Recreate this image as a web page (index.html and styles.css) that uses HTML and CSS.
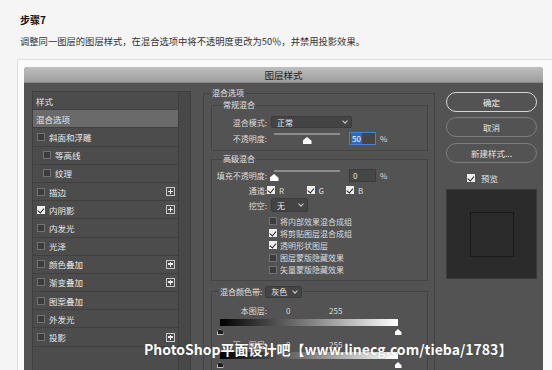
FILE: index.html
```html
<!DOCTYPE html>
<html lang="zh">
<head>
  <meta charset="UTF-8">
  <meta name="viewport" content="width=device-width, initial-scale=1.0">
  <title>步骤7</title>
  <link rel="stylesheet" href="styles.css">
</head>
<body>
  <div class="step">
    <h3 class="step-title">步骤7</h3>
    <p class="step-desc">调整同一图层的图层样式，在混合选项中将不透明度更改为50％，并禁用投影效果。</p>
  </div>

  <div class="frame">
    <div class="dialog">
      <div class="titlebar">图层样式</div>
      <div class="dialog-body">
        <!-- effects list -->
        <div class="side">
          <ul class="style-list">
            <li class="head">样式</li>
            <li class="active">混合选项</li>
            <li><span class="cb"></span>斜面和浮雕</li>
            <li class="sub"><span class="cb"></span>等高线</li>
            <li class="sub"><span class="cb"></span>纹理</li>
            <li><span class="cb"></span>描边<span class="plus"></span></li>
            <li><span class="cb on"></span>内阴影<span class="plus"></span></li>
            <li><span class="cb"></span>内发光</li>
            <li><span class="cb"></span>光泽</li>
            <li><span class="cb"></span>颜色叠加<span class="plus"></span></li>
            <li><span class="cb"></span>渐变叠加<span class="plus"></span></li>
            <li><span class="cb"></span>图案叠加</li>
            <li><span class="cb"></span>外发光</li>
            <li><span class="cb"></span>投影<span class="plus"></span></li>
          </ul>
          <div class="gutter"></div>
        </div>

        <!-- blending options -->
        <div class="main">
          <fieldset class="group outer">
            <legend>混合选项</legend>

            <fieldset class="group normal">
              <legend class="sub-legend">常规混合</legend>
              <div class="row first">
                <span class="label">混合模式:</span>
                <div class="select wide">正常<span class="chev"></span></div>
              </div>
              <div class="row num">
                <span class="label">不透明度:</span>
                <div class="slider"><span class="thumb" style="left: 50%"></span></div>
                <div class="field focus"><span class="sel">50</span></div>
                <span class="unit">%</span>
              </div>
            </fieldset>

            <fieldset class="group advanced">
              <legend class="sub-legend">高级混合</legend>
              <div class="row num fill">
                <span class="label">填充不透明度:</span>
                <div class="slider"><span class="thumb" style="left: 0%"></span></div>
                <div class="field">0</div>
                <span class="unit">%</span>
              </div>
              <div class="row channels">
                <span class="label">通道:</span>
                <span class="chan"><span class="cb on"></span>R</span>
                <span class="chan"><span class="cb on"></span>G</span>
                <span class="chan"><span class="cb on"></span>B</span>
              </div>
              <div class="row knock">
                <span class="label">挖空:</span>
                <div class="select short">无<span class="chev"></span></div>
              </div>
              <ul class="options">
                <li><span class="cb"></span>将内部效果混合成组</li>
                <li><span class="cb on"></span>将剪贴图层混合成组</li>
                <li><span class="cb on"></span>透明形状图层</li>
                <li><span class="cb"></span>图层蒙版隐藏效果</li>
                <li><span class="cb"></span>矢量蒙版隐藏效果</li>
              </ul>
            </fieldset>

            <fieldset class="group blendif">
              <legend class="band-legend">混合颜色带:<span class="select short">灰色<span class="chev"></span></span></legend>
              <div class="row levels">
                <span class="label">本图层:</span>
                <span class="lvl-lo">0</span>
                <span class="lvl-hi">255</span>
              </div>
              <div class="ramp"></div>
              <div class="stops"><span class="stop dark"></span><span class="stop light"></span></div>
              <div class="row levels next">
                <span class="label">下一图层:</span>
                <span class="lvl-lo">0</span>
                <span class="lvl-hi">255</span>
              </div>
              <div class="ramp"></div>
              <div class="stops"><span class="stop dark"></span><span class="stop light"></span></div>
            </fieldset>
          </fieldset>
        </div>

        <!-- buttons and preview -->
        <div class="actions">
          <button class="btn default">确定</button>
          <button class="btn">取消</button>
          <button class="btn">新建样式...</button>
          <label class="preview-check"><span class="cb on"></span>预览</label>
          <div class="preview"><div class="swatch"></div></div>
        </div>
      </div>
    </div>
  </div>

  <div class="watermark">PhotoShop平面设计吧【www.linecg.com/tieba/1783】</div>
</body>
</html>
```

FILE: styles.css
```css
body {
  margin: 0;
  height: 370px;
  overflow: hidden;
  background-color: #f5f5f5;
  font-family: "Noto Sans CJK SC", "Liberation Sans", sans-serif;
  position: relative;
}

ul {
  list-style: none;
  margin: 0;
  padding: 0;
}

/* article text */
.step {
  padding: 14px 0 0 20px;
}

.step-title {
  margin: 0;
  font-size: 10px;
  line-height: 12px;
  font-weight: bold;
  color: #111;
}

.step-desc {
  margin: 9px 0 0;
  font-size: 9.3px;
  line-height: 12px;
  color: #333;
}

.frame {
  margin: 12px 0 0 17px;
  width: 560px;
  padding: 7px 0 0 6px;
  border: 1px solid #e0e0e0;
  background-color: #fafafa;
}

/* dialog */
.dialog {
  width: 519px;
  border-radius: 4px 4px 0 0;
  overflow: hidden;
  background-color: #535353;
}

.titlebar {
  height: 16px;
  line-height: 16px;
  text-align: center;
  font-size: 9.5px;
  color: #1c1c1c;
  background: linear-gradient(#bfbfbf, #9d9d9d);
  border-bottom: 1px solid #888;
  box-sizing: border-box;
}

.dialog-body {
  display: flex;
  height: 300px;
  padding: 8px 0 0 8px;
}

.side {
  display: flex;
  width: 159px;
  height: 292px;
  border: 1px solid #3f3f3f;
  box-sizing: border-box;
}

.style-list {
  flex: 1;
  background-color: #4c4c4c;
}

.style-list li {
  display: flex;
  align-items: center;
  gap: 4px;
  height: 18.2px;
  padding-left: 4px;
  border-bottom: 1px solid #404040;
  box-sizing: border-box;
  font-size: 8.5px;
  color: #e8e8e8;
}

.style-list .head,
.style-list .active {
  padding-left: 3px;
}

.style-list .active {
  background-color: #6a6a6a;
}

.style-list .sub {
  padding-left: 10px;
}

.gutter {
  width: 11px;
  background-color: #484848;
  border-left: 1px solid #3f3f3f;
}

.cb {
  position: relative;
  flex: none;
  width: 8px;
  height: 8px;
  border: 1px solid #727272;
  background-color: #3c3c3c;
  box-sizing: border-box;
}

.cb.on {
  border-color: #eee;
  background-color: #eee;
}

.cb.on::after {
  content: "";
  position: absolute;
  left: 1px;
  top: 0;
  width: 3px;
  height: 4.5px;
  border: solid #222;
  border-width: 0 1.5px 1.5px 0;
  transform: rotate(40deg);
}

.plus {
  position: relative;
  width: 9px;
  height: 9px;
  margin-left: auto;
  margin-right: 3px;
  border: 1px solid #c8c8c8;
  box-sizing: border-box;
}

.plus::before,
.plus::after {
  content: "";
  position: absolute;
  background-color: #eee;
}

.plus::before {
  left: 1px;
  right: 1px;
  top: 2.5px;
  height: 1.5px;
}

.plus::after {
  top: 1px;
  bottom: 1px;
  left: 2.5px;
  width: 1.5px;
}

/* blending options */
.main {
  width: 245px;
  padding-left: 12px;
  box-sizing: border-box;
  font-size: 8px;
  color: #dcdcdc;
}

.group {
  margin: 0;
  padding: 0;
  min-width: 0;
  border: 1px solid #444;
}

.group legend {
  padding: 0 1px;
  font-size: 8px;
  line-height: 10px;
  color: #e2e2e2;
}

.outer {
  width: 232px;
  height: 300px;
  margin-top: -3px;
  padding: 0 6px 0 7px;
  box-sizing: border-box;
}

.sub-legend {
  margin-left: 10px;
}

.normal {
  margin-top: 2px;
  padding-bottom: 5px;
}

.advanced {
  margin-top: 3px;
  padding-bottom: 4px;
}

.blendif {
  margin-top: 5px;
  height: 100px;
}

.row {
  display: flex;
  align-items: center;
}

.label {
  width: 55px;
  flex: none;
  text-align: right;
}

.row.first {
  margin-top: 6px;
  height: 12px;
}

.row.num {
  margin-top: 4px;
  height: 13px;
}

.row.fill {
  margin-top: 5px;
}

.select {
  display: flex;
  align-items: center;
  justify-content: space-between;
  height: 12px;
  margin-left: 4px;
  padding: 0 4px 0 5px;
  background-color: #444;
  border: 1px solid #3b3b3b;
  border-radius: 2px;
  box-sizing: border-box;
  font-size: 8px;
  color: #eaeaea;
}

.select.wide {
  width: 81px;
}

.select.short {
  width: 37px;
}

.chev {
  width: 3px;
  height: 3px;
  margin-top: -2px;
  border: solid #cfcfcf;
  border-width: 0 1px 1px 0;
  transform: rotate(45deg);
}

.slider {
  position: relative;
  width: 66px;
  height: 13px;
  margin-left: 7px;
  background: linear-gradient(#8c8c8c, #8c8c8c) 0 1px / 100% 2px no-repeat;
}

.thumb {
  position: absolute;
  top: 5px;
  width: 9px;
  height: 7px;
  margin-left: -4.5px;
  background-color: #fff;
  clip-path: polygon(50% 0, 100% 55%, 100% 100%, 0 100%, 0 55%);
}

.field {
  width: 27px;
  height: 13px;
  margin-left: 9px;
  padding-left: 3px;
  line-height: 11px;
  background-color: #464646;
  border: 1px solid #3b3b3b;
  box-sizing: border-box;
  color: #e6e6e6;
}

.field.focus {
  border-color: #3f83db;
  padding-left: 1px;
}

.sel {
  display: inline-block;
  padding: 0 1px;
  background-color: #2f69bf;
  color: #fff;
}

.unit {
  margin-left: 4px;
}

.channels {
  margin-top: 3px;
  height: 10px;
}

.chan {
  display: flex;
  align-items: center;
  gap: 4px;
  width: 39.5px;
}

.channels .chan:first-of-type {
  margin-left: 3px;
}

.knock {
  margin-top: 3px;
  height: 14px;
}

.knock .select {
  height: 14px;
}

.options {
  margin: 3px 0 0 57px;
}

.options li {
  display: flex;
  align-items: center;
  gap: 3px;
  height: 12.2px;
}

.band-legend {
  display: flex;
  align-items: center;
  margin-left: 7px;
}

.band-legend .select {
  margin-left: 3px;
}

.levels {
  margin-top: 8px;
  height: 10px;
}

.levels.next {
  margin-top: 5px;
}

.lvl-lo {
  margin-left: 19px;
  width: 43px;
}

.ramp {
  width: 178px;
  height: 7px;
  margin: 3px 0 0 8px;
  background: linear-gradient(to right, #000, #fff);
}

.levels.next + .ramp {
  margin-top: 2px;
}

.stops {
  display: flex;
  justify-content: space-between;
  width: 185px;
  height: 6px;
  margin: 3px 0 0 4.5px;
}

.stop {
  width: 7px;
  height: 6px;
  clip-path: polygon(50% 0, 100% 55%, 100% 100%, 0 100%, 0 55%);
}

.stop.dark {
  background-color: #1a1a1a;
  box-shadow: inset 0 0 0 1px #bbb;
}

.stop.light {
  background-color: #fff;
}

/* right column */
.actions {
  display: flex;
  flex-direction: column;
  width: 107px;
  padding: 1px 6px 0 10px;
  box-sizing: border-box;
}

.btn {
  height: 20px;
  margin-bottom: 5px;
  padding: 0;
  border: 1px solid #7d7d7d;
  border-radius: 10px;
  background-color: transparent;
  font-family: inherit;
  font-size: 8.5px;
  color: #e4e4e4;
}

.btn.default {
  border: 1.5px solid #d4d4d4;
  color: #f4f4f4;
}

.btn + .btn + .btn {
  margin-top: 1px;
}

.preview-check {
  display: flex;
  align-items: center;
  gap: 6px;
  height: 10px;
  margin: 5px 0 0 21px;
  font-size: 8.5px;
  color: #e4e4e4;
}

.preview {
  display: flex;
  align-items: center;
  justify-content: center;
  height: 90px;
  margin-top: 6px;
  background-color: #2b2b2b;
  border: 1px solid #3a3a3a;
  box-sizing: border-box;
}

.swatch {
  width: 44px;
  height: 45px;
  border: 1px solid #1a1a1a;
  box-sizing: border-box;
}

/* watermark over the screenshot */
.watermark {
  position: absolute;
  left: 144px;
  top: 340px;
  font-size: 14px;
  line-height: 18px;
  font-weight: bold;
  color: #fff;
  white-space: nowrap;
  text-shadow: 0 0 1px rgba(0, 0, 0, 0.5);
}
```
